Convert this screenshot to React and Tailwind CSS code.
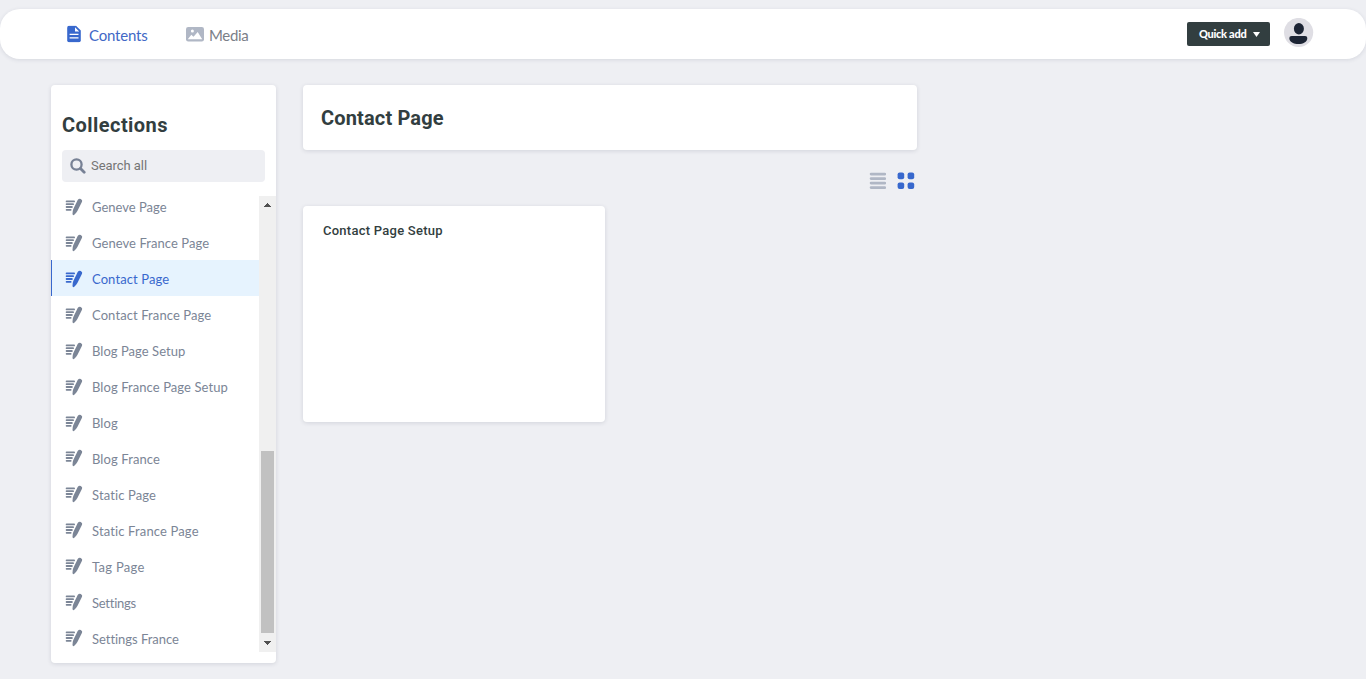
import React from "react";

const collections = [
  { label: "Geneve Page", tracking: "tracking-[0px]" },
  { label: "Geneve France Page", tracking: "tracking-[0.06px]" },
  { label: "Contact Page", tracking: "tracking-[0.1px]", active: true },
  { label: "Contact France Page", tracking: "tracking-[0.1px]" },
  { label: "Blog Page Setup", tracking: "tracking-[0.04px]" },
  { label: "Blog France Page Setup", tracking: "tracking-[0.08px]" },
  { label: "Blog", tracking: "tracking-[0.1px]" },
  { label: "Blog France", tracking: "tracking-[0.1px]", raised: true },
  { label: "Static Page", tracking: "tracking-[0.12px]", raised: true },
  { label: "Static France Page", tracking: "tracking-[0.14px]", raised: true },
  { label: "Tag Page", tracking: "tracking-[0.3px]", raised: true },
  { label: "Settings", tracking: "tracking-[-0.25px]", raised: true },
  { label: "Settings France", tracking: "tracking-[-0.03px]", raised: true },
];

function WriteIcon({ className }) {
  return (
    <svg width="18" height="18" viewBox="0 0 18 18" className={className}>
      <g stroke="currentColor" strokeWidth="1.8" strokeLinecap="round">
        <path d="M1.6 3.4H9.1M1.6 6.2H8.1M1.6 9H6.9M1.6 11.8H5.7" />
      </g>
      <path
        fill="currentColor"
        d="M12.7 1.9Q13.9.1 15.8.9Q17.8 1.9 17 3.8L12.4 13.1Q11.7 14.5 9 17Q7.6 17.5 7.5 16Q7.6 12.4 8.3 10.9Z"
      />
    </svg>
  );
}

function DocumentIcon() {
  return (
    <svg width="14" height="17" viewBox="0 0 14 17" className="block shrink-0 -translate-y-[0.5px]">
      <path fill="#3868cd" d="M2 .3H9L13.8 5V14.7Q13.8 16.7 11.8 16.7H2Q.2 16.7.2 14.7V2.3Q.2.3 2 .3Z" />
      <path fill="#fff" d="M8 1.8V6H12.2ZM2.6 8.3H11.5V9.6H2.6ZM2.6 11.7H11.5V13H2.6Z" />
    </svg>
  );
}

function ImageIcon() {
  return (
    <svg width="18" height="15" viewBox="0 0 18 15" className="block shrink-0">
      <rect width="18" height="14.4" rx="2.2" fill="#b0b7c5" />
      <circle cx="6.4" cy="3.9" r="1.5" fill="#fff" />
      <path fill="#fff" d="M1.8 12.2L5.3 7.7L7.5 9.8L11.7 5L16.2 12.2Z" />
    </svg>
  );
}

function SearchIcon() {
  return (
    <svg width="16" height="16" viewBox="0 0 16 16" className="block shrink-0" fill="none" stroke="#778195">
      <circle cx="6.5" cy="6.5" r="5.1" strokeWidth="2.3" />
      <path d="M10.5 10.5L14.2 14.2" strokeWidth="2.8" strokeLinecap="round" />
    </svg>
  );
}

function Avatar() {
  return (
    <svg width="30" height="30" viewBox="0 0 30 30" className="block shrink-0">
      <circle cx="14.6" cy="14.5" r="14.6" fill="#dfdee4" />
      <ellipse cx="14.9" cy="10.7" rx="5" ry="5.7" fill="#1c2434" />
      <path fill="#1c2434" d="M7.7 18H21.1Q23.3 18 23.3 19.9C23.3 24 19 26 14.4 26S5.3 24 5.3 19.9Q5.3 18 7.7 18Z" />
    </svg>
  );
}

function Header() {
  return (
    <header className="flex h-[50px] items-center rounded-[20px] bg-white pl-[67px] pr-[52px] shadow-[0_1px_4px_rgba(40,50,80,0.12)]">
      <nav className="flex h-full items-center text-[15px]">
        <a className="flex items-center text-[#4168c6]">
          <DocumentIcon />
          <span className="ml-2 w-[97px] pt-[2px] tracking-[-0.2px]">Contents</span>
        </a>
        <a className="flex items-center text-[#7b8088]">
          <ImageIcon />
          <span className="ml-[5px] pt-[2px] tracking-[-0.35px]">Media</span>
        </a>
      </nav>
      <button className="ml-auto flex h-6 w-[83px] items-center rounded-[2px] bg-[#323e40] pl-3 text-[11px] font-black text-white">
        <span className="whitespace-nowrap pt-[1px] tracking-[-0.3px]">Quick add</span>
        <svg width="7" height="5" viewBox="0 0 7 5" className="ml-auto mr-[10px]">
          <path fill="#fff" d="M0 0H7L3.5 5Z" />
        </svg>
      </button>
      <div className="ml-[14px] -mt-[2px]">
        <Avatar />
      </div>
    </header>
  );
}

function Scrollbar() {
  return (
    <div className="flex w-[17px] shrink-0 flex-col items-center bg-[#f0f0f0]">
      <svg width="17" height="17" viewBox="0 0 17 17" className="shrink-0" shapeRendering="crispEdges">
        <path fill="#505050" d="M8 7H9V8H10V9H11V10H12V11H5V10H6V9H7V8H8Z" />
      </svg>
      <div className="mt-[238px] h-[182px] w-[13px] bg-[#c1c1c1]" />
      <svg width="17" height="17" viewBox="0 0 17 17" className="mt-auto shrink-0" shapeRendering="crispEdges">
        <path fill="#505050" d="M5 6H12V7H11V8H10V9H9V10H8V9H7V8H6V7H5Z" />
      </svg>
    </div>
  );
}

function Sidebar() {
  return (
    <aside className="flex h-[578px] w-[225px] shrink-0 flex-col rounded bg-white shadow-[0_1px_4px_rgba(40,50,80,0.14)]">
      <h2 className="ml-[11px] mt-[26px] h-7 whitespace-nowrap font-['Roboto',sans-serif] text-[20px] font-bold leading-7 tracking-[0.45px] text-[#323e40]">
        Collections
      </h2>
      <div className="mx-[11px] mt-[11px] flex h-8 items-center rounded bg-[#eeeff3] pl-2">
        <SearchIcon />
        <span className="ml-[5px] font-['Roboto',sans-serif] text-[13px] leading-8 tracking-[-0.05px] text-[#757575]">Search all</span>
      </div>
      <div className="mt-[14px] flex h-[456px]">
        <div className="flex-1 overflow-hidden">
          <ul className="-mt-2">
            {collections.map((item) => (
              <li
                key={item.label}
                className={
                  item.active
                    ? "flex h-9 items-center border-l border-[#3868cd] bg-[#e6f3fe] text-[#3868cd]"
                    : "flex h-9 items-center border-l border-transparent text-[#7b8596]"
                }
              >
                <WriteIcon className={item.raised ? "ml-[13px] mb-[1px] shrink-0" : "ml-[13px] mt-[1px] shrink-0"} />
                <span className={`ml-[9px] whitespace-nowrap pt-[3px] text-[13px] ${item.tracking}`}>{item.label}</span>
              </li>
            ))}
          </ul>
        </div>
        <Scrollbar />
      </div>
    </aside>
  );
}

function ViewSwitch() {
  return (
    <div className="mt-[22px] flex h-[18px] justify-end gap-[11px] pr-[2px]">
      <svg width="17" height="18" viewBox="0 0 17 18" stroke="#b0b7c5" strokeWidth="2.6" strokeLinecap="round">
        <path d="M2 2.1H15.9M2 6.6H15.9M2 11.1H15.9M2 15.6H15.9" />
      </svg>
      <svg width="18" height="18" viewBox="0 0 18 18" fill="#3868cd">
        <rect x="0.6" y="0.6" width="6.6" height="6.6" rx="2" />
        <rect x="10.6" y="0.6" width="6.6" height="6.6" rx="2" />
        <rect x="0.6" y="10.4" width="6.6" height="6.6" rx="2" />
        <rect x="10.6" y="10.4" width="6.6" height="6.6" rx="2" />
      </svg>
    </div>
  );
}

export default function App() {
  return (
    <div className="h-[679px] overflow-hidden bg-[#eeeff3] pt-[9px] font-['Lato',sans-serif]">
      <Header />
      <main className="mt-[26px] flex gap-[27px] pl-[51px]">
        <Sidebar />
        <section className="w-[614px]">
          <div className="flex h-[65px] items-center rounded bg-white pl-[18px] shadow-[0_1px_4px_rgba(40,50,80,0.14)]">
            <h1 className="font-['Roboto',sans-serif] text-[20px] font-bold leading-7 tracking-[0.15px] text-[#323e40]">Contact Page</h1>
          </div>
          <ViewSwitch />
          <article className="mt-4 h-[216px] w-[302px] rounded bg-white pl-5 pt-[15px] shadow-[0_1px_4px_rgba(40,50,80,0.14)]">
            <h3 className="font-['Roboto',sans-serif] text-[13px] font-medium leading-5 tracking-[0.25px] text-[#323e40]">
              Contact Page Setup
            </h3>
          </article>
        </section>
      </main>
    </div>
  );
}
